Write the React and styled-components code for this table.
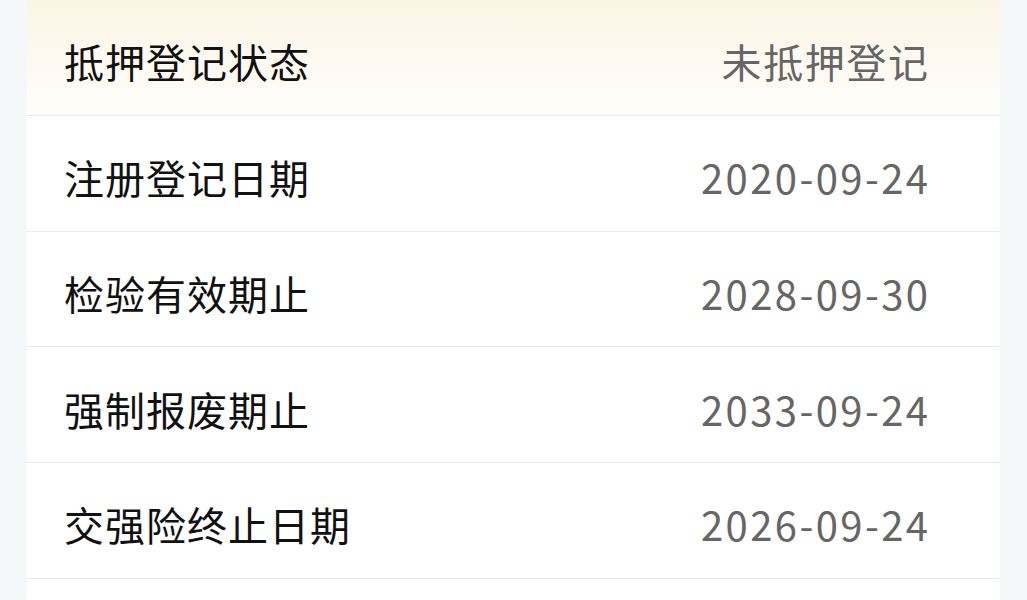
import React from "react";
import styled, { createGlobalStyle } from "styled-components";

const Global = createGlobalStyle`
  html, body { margin: 0; padding: 0; background: #f4f8f9; }
  body { font-family: "Noto Sans CJK SC", "Noto Sans", sans-serif; }
`;

const Page = styled.div`
  width: 1027px;
  height: 600px;
  overflow: hidden;
  background: #f4f8f9;
  padding: 0 27px;
  box-sizing: border-box;
`;

const Card = styled.div`
  background: #ffffff;
  display: flex;
  flex-direction: column;
`;

const Row = styled.div`
  display: flex;
  align-items: center;
  justify-content: space-between;
  height: 115.75px;
  box-sizing: border-box;
  padding: 8px 72px 0 37px;
  border-bottom: 1px solid #ebebeb;
  background: ${(p) =>
    p.$highlight
      ? "linear-gradient(180deg, #fcf5e6 0%, #fdf9f0 50%, #fffefb 100%)"
      : "#ffffff"};
`;

const Label = styled.span`
  font-size: 40px;
  color: #111111;
  letter-spacing: 1px;
`;

const Value = styled.span`
  font-size: 40px;
  color: #666666;
  letter-spacing: ${(p) => (p.$numeric ? "2.4px" : "1.6px")};
  margin-right: ${(p) => (p.$numeric ? "-2.4px" : "-1.6px")};
`;

const rows = [
  ["抵押登记状态", "未抵押登记"],
  ["注册登记日期", "2020-09-24"],
  ["检验有效期止", "2028-09-30"],
  ["强制报废期止", "2033-09-24"],
  ["交强险终止日期", "2026-09-24"],
  ["", ""],
];

export default function App() {
  return (
    <>
      <Global />
      <Page>
        <Card>
          {rows.map(([l, v], i) => (
            <Row key={i} $highlight={i === 0}>
              <Label>{l}</Label>
              <Value $numeric={/^\d/.test(v)}>{v}</Value>
            </Row>
          ))}
        </Card>
      </Page>
    </>
  );
}
